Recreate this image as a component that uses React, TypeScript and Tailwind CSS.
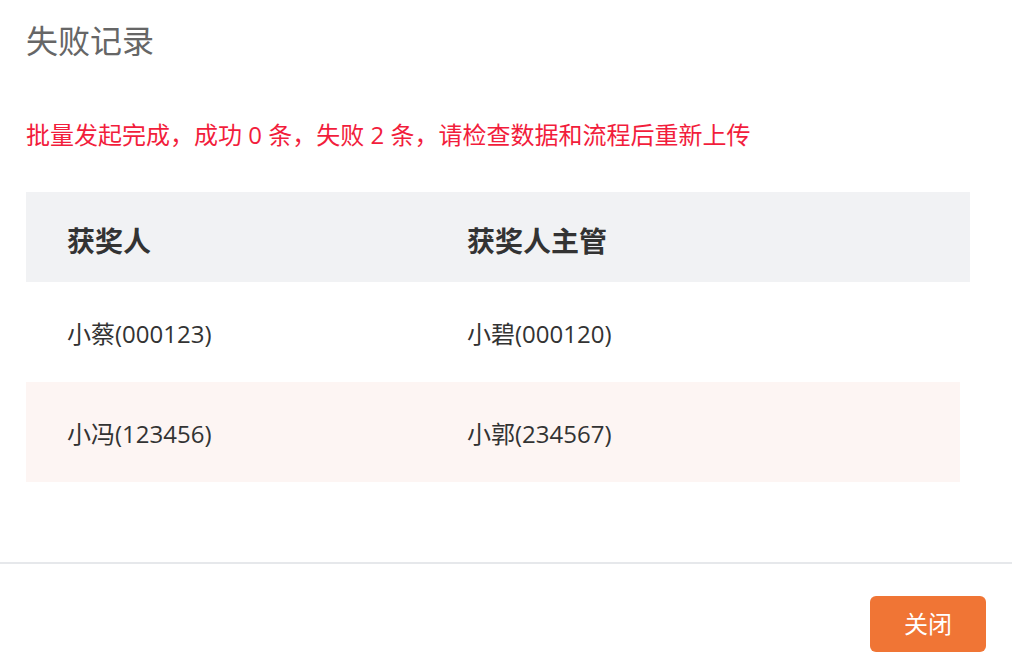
import React from "react";

const rows = [
  { a: "小蔡(000123)", b: "小碧(000120)", bg: "bg-white", w: "mr-[42px]" },
  { a: "小冯(123456)", b: "小郭(234567)", bg: "bg-[#fdf5f3]", w: "mr-[52px]" },
];

export default function App() {
  return (
    <div
      className="w-[1012px] h-[672px] bg-white flex flex-col overflow-hidden"
      style={{ fontFamily: '"Open Sans", "Noto Sans CJK SC", sans-serif' }}
    >
      <div className="pl-[26px] pt-[19px] text-[32px] leading-[44px] text-[#666666]">失败记录</div>
      <div className="pl-[26px] mt-[56px] text-[24px] leading-[32px] text-[#f21d3c]">
        批量发起完成，成功 0 条，失败 2 条，请检查数据和流程后重新上传
      </div>
      <div className="mt-[41px] ml-[26px] flex flex-col">
        <div className="mr-[42px] h-[90px] bg-[#f1f2f4] flex items-center pt-[8px] text-[28px] font-bold text-[#333333]">
          <div className="w-[400px] pl-[41px]">获奖人</div>
          <div className="pl-[41px]">获奖人主管</div>
        </div>
        {rows.map((r) => (
          <div
            key={r.a}
            className={`${r.bg} ${r.w} h-[100px] flex items-center pt-[4px] text-[24px] text-[#333333]`}
          >
            <div className="w-[400px] pl-[41px]">{r.a}</div>
            <div className="pl-[41px]">{r.b}</div>
          </div>
        ))}
      </div>
      <div className="mt-[80px] h-[2px] bg-[#e6e8eb]" />
      <div className="flex justify-end pr-[26px] mt-[32px]">
        <button className="w-[116px] h-[56px] rounded-[6px] bg-[#f07535] text-white text-[24px] flex items-center justify-center">
          关闭
        </button>
      </div>
    </div>
  );
}
